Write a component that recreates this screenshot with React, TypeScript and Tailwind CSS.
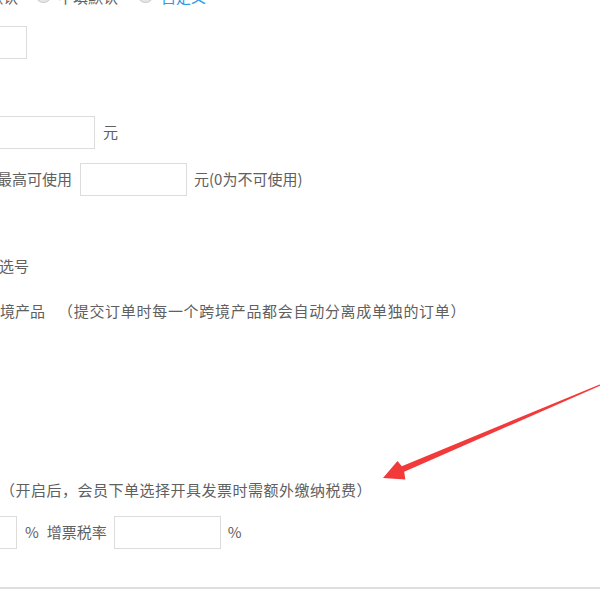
import React from "react";

// 输入框 (截图中被裁掉一部分)
function Field({ className = "" }: { className?: string }) {
    return <div className={"h-[33px] w-[107px] shrink-0 border border-[#dcdcdc] bg-white " + className} />;
}

function Radio() {
    return <span className="inline-block h-[17px] w-[17px] shrink-0 rounded-full border border-[#c8c8c8] bg-[#e6e6e6]" />;
}

export default function App() {
    return (
        <div
            className="relative h-[600px] w-[600px] overflow-hidden bg-white text-[15px] text-[#606060]"
            style={{ fontFamily: '"Noto Sans CJK SC", "Liberation Sans", sans-serif' }}
        >
            <div className="flex flex-col">
                {/* 单选行 */}
                <div className="mt-[-13px] flex h-[20px] items-center whitespace-nowrap">
                    <span className="ml-[-12px]">默认</span>
                    <span className="ml-[17px]"><Radio /></span>
                    <span className="ml-[6px]">不填默认</span>
                    <span className="ml-[19px]"><Radio /></span>
                    <span className="ml-[7px] text-[#2f9ae8]">自定义</span>
                </div>

                <div className="mt-[19px] flex">
                    <Field className="ml-[-80px]" />
                </div>

                <div className="mt-[57px] flex items-center whitespace-nowrap">
                    <Field className="ml-[-12px]" />
                    <span className="ml-[8px]">元</span>
                </div>

                <div className="mt-[14px] flex items-center whitespace-nowrap">
                    <span className="ml-[-3px]">最高可使用</span>
                    <Field className="ml-[8px]" />
                    <span className="ml-[7px]">元(0为不可使用)</span>
                </div>

                <div className="mt-[60px] flex h-[20px] items-center whitespace-nowrap">
                    <span className="ml-[-1px]">选号</span>
                </div>

                <div className="mt-[25px] flex h-[20px] items-center whitespace-nowrap">
                    <span>境产品</span>
                    <span className="ml-[13px] tracking-[0.7px]">（提交订单时每一个跨境产品都会自动分离成单独的订单）</span>
                </div>

                <div className="mt-[159px] flex h-[20px] items-center whitespace-nowrap">
                    <span className="tracking-[0.5px]">（开启后，会员下单选择开具发票时需额外缴纳税费）</span>
                </div>

                <div className="mt-[16px] flex items-center whitespace-nowrap">
                    <Field className="ml-[-90px]" />
                    <span className="ml-[8px]">%</span>
                    <span className="ml-[8px]">增票税率</span>
                    <Field className="ml-[7px]" />
                    <span className="ml-[7px]">%</span>
                </div>

                <div className="mt-[38px] h-[2px] w-full bg-[#dedede]" />
            </div>

            {/* 红色箭头标注 */}
            <svg className="pointer-events-none absolute left-0 top-0" width="600" height="600" viewBox="0 0 600 600">
                <polygon
                    points="383,478 397.5,461 401.8,466.2 599.7,384.4 600.3,385.6 404.2,471.8 405.3,479.4"
                    fill="#f23a3a"
                />
            </svg>
        </div>
    );
}
